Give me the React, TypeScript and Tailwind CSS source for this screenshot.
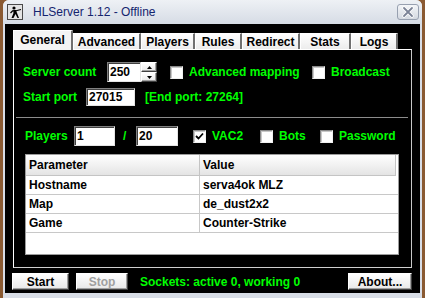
import React from "react";

const green = "text-[#00ff00]";

const sunken =
  "bg-white border border-t-[#808080] border-l-[#808080] border-r-[#e4e4e4] border-b-[#e4e4e4] shadow-[inset_1px_1px_0_#404040]";

const raised =
  "bg-linear-to-b from-[#ffffff] to-[#e8e8e8] border border-t-white border-l-white border-r-[#404040] border-b-[#404040] shadow-[inset_-1px_-1px_0_#a0a0a0]";

const tabs = [
  { name: "General", w: "w-[60px]" },
  { name: "Advanced", w: "w-[68px]" },
  { name: "Players", w: "w-[54px]" },
  { name: "Rules", w: "w-[47px]" },
  { name: "Redirect", w: "w-[58px]" },
  { name: "Stats", w: "w-[51px]" },
  { name: "Logs", w: "w-[47px]" },
];

const rows = [
  ["Hostname", "serva4ok MLZ"],
  ["Map", "de_dust2x2"],
  ["Game", "Counter-Strike"],
];

const Checkbox = ({ checked = false }: { checked?: boolean }) => (
  <div
    className={`w-[13px] h-[13px] shrink-0 flex items-center justify-center bg-white border border-t-[#8a8a8a] border-l-[#8a8a8a] border-r-[#f0f0f0] border-b-[#f0f0f0] shadow-[inset_1px_1px_0_#c8c8c8]`}
  >
    {checked && (
      <svg width="9" height="9" viewBox="0 0 9 9">
        <path d="M1 4 L3.5 6.5 L8 1.5" stroke="#000" strokeWidth="1.8" fill="none" />
      </svg>
    )}
  </div>
);

const CsIcon = () => (
  <svg width="16" height="16" viewBox="0 0 16 16">
    <rect x="0.5" y="0.5" width="15" height="15" fill="#e4e4e4" stroke="#4a4a4a" />
    <circle cx="7" cy="4" r="1.6" fill="#000" />
    <path d="M6 6 L9 6 L10 9 L12 14 L10.5 14 L8.5 10 L6.5 14 L4.5 14 L6.5 9 Z" fill="#000" />
    <path d="M8 7 L14 5.5" stroke="#000" strokeWidth="1.2" />
    <path d="M6 6.5 L3.5 9" stroke="#000" strokeWidth="1.2" />
  </svg>
);

const CloseButton = () => (
  <svg width="22" height="16" viewBox="0 0 22 16">
    <defs>
      <linearGradient id="cb" x1="0" y1="0" x2="0" y2="1">
        <stop offset="0" stopColor="#f4f6f9" />
        <stop offset="1" stopColor="#d3d8e0" />
      </linearGradient>
    </defs>
    <rect x="0.5" y="0.5" width="21" height="15" rx="2.5" fill="url(#cb)" stroke="#97a0b0" />
    <path d="M7 4 L15 12 M15 4 L7 12" stroke="#fff" strokeWidth="3.4" strokeLinecap="round" />
    <path d="M7 4 L15 12 M15 4 L7 12" stroke="#7a8296" strokeWidth="1.8" strokeLinecap="round" />
  </svg>
);

const App = () => {
  return (
    <div className="w-[425px] h-[298px] bg-[#8a5a32] px-[3px] overflow-hidden font-['Liberation_Sans',Arial,sans-serif] text-[12px] leading-none">
      <div className="h-full flex flex-col rounded-t-[6px] overflow-hidden bg-[#d8dde6]">
        {/* title bar */}
        <div className="h-[24px] shrink-0 flex items-center pl-[4px] pr-[3px] bg-linear-to-b from-[#eef1f5] to-[#d6dce5]">
          <CsIcon />
          <span className="ml-[10px] text-[12px] text-[#14246e]">HLServer 1.12 - Offline</span>
          <div className="ml-auto">
            <CloseButton />
          </div>
        </div>

        {/* body */}
        <div className="flex-1 mx-[2px] bg-black px-[8px] pt-[6px] flex flex-col font-bold">
          <div className="h-[19px] flex items-end">
            {tabs.map((t, i) =>
              i === 0 ? (
                <div
                  key={t.name}
                  className={`${t.w} h-[20px] -mb-px relative z-10 flex items-center justify-center pb-[2px] bg-[#f4f4f4] border-l border-t border-white border-r-2 border-r-[#707070] text-black`}
                >
                  {t.name}
                </div>
              ) : (
                <div
                  key={t.name}
                  className={`${t.w} h-[16px] flex items-center justify-center pt-[1px] bg-linear-to-b from-[#ffffff] to-[#ececec] border-l border-t border-white border-r-2 border-r-[#707070] text-black`}
                >
                  {t.name}
                </div>
              )
            )}
          </div>

          {/* panel */}
          <div className="h-[219px] shrink-0 flex flex-col border border-t-white border-l-white border-r-[#c8c8c8] border-b-[#d0d0d0]">
            <div className="mt-[12px] h-[20px] pl-[9px] flex items-center">
              <span className={`w-[84px] ${green}`}>Server count</span>
              <div className={`${sunken} w-[34px] h-[20px] flex items-center pl-[2px] text-black`}>250</div>
              <div className="w-[16px] h-[20px] flex flex-col">
                <div className={`${raised} flex-1 flex items-center justify-center`}>
                  <svg width="5" height="3" viewBox="0 0 5 3"><path d="M2.5 0 L5 3 L0 3 Z" fill="#000" /></svg>
                </div>
                <div className={`${raised} flex-1 flex items-center justify-center`}>
                  <svg width="5" height="3" viewBox="0 0 5 3"><path d="M0 0 L5 0 L2.5 3 Z" fill="#000" /></svg>
                </div>
              </div>
              <div className="ml-[13px]"><Checkbox /></div>
              <span className={`ml-[6px] w-[123px] ${green}`}>Advanced mapping</span>
              <Checkbox />
              <span className={`ml-[6px] ${green}`}>Broadcast</span>
            </div>

            <div className="mt-[6px] h-[18px] pl-[9px] flex items-center">
              <span className={`w-[63px] ${green}`}>Start port</span>
              <div className={`${sunken} w-[49px] h-[18px] flex items-center pl-[2px] text-black`}>27015</div>
              <span className={`ml-[10px] ${green}`}>[End port: 27264]</span>
            </div>

            <div className="mt-[11px] ml-[2px] mr-[3px] h-px bg-[#8c8c8c]" />

            <div className="mt-[8px] h-[20px] pl-[11px] flex items-center">
              <span className={`w-[49px] ${green}`}>Players</span>
              <div className={`${sunken} w-[41px] h-[20px] flex items-center pl-[2px] text-black`}>1</div>
              <span className={`w-[21px] pl-[8px] ${green}`}>/</span>
              <div className={`${sunken} w-[42px] h-[20px] flex items-center pl-[2px] text-black`}>20</div>
              <div className="ml-[15px]"><Checkbox checked /></div>
              <span className={`ml-[6px] w-[48px] ${green}`}>VAC2</span>
              <Checkbox />
              <span className={`ml-[6px] w-[41px] ${green}`}>Bots</span>
              <Checkbox />
              <span className={`ml-[6px] ${green}`}>Password</span>
            </div>

            <div className="mt-[8px] ml-[11px] w-[374px] h-[101px] bg-white border border-[#9c9c9c] flex flex-col text-black">
              <div className="h-[21px] shrink-0 flex bg-linear-to-b from-[#ffffff] to-[#e4e4e4] border-b border-[#c4c4c4] mr-[2px] border-r">
                <div className="w-[174px] flex items-center pl-[3px] border-r border-[#c4c4c4]">Parameter</div>
                <div className="flex-1 flex items-center pl-[3px]">Value</div>
              </div>
              {rows.map(([k, v]) => (
                <div key={k} className="h-[19px] shrink-0 flex border-b border-[#c8c8c8]">
                  <div className="w-[174px] flex items-center pl-[3px] border-r border-[#c8c8c8]">{k}</div>
                  <div className="flex-1 flex items-center pl-[3px]">{v}</div>
                </div>
              ))}
            </div>
          </div>

          {/* bottom bar */}
          <div className="mt-[5px] h-[17px] -ml-px flex items-center">
            <div className={`${raised} w-[57px] h-[17px] flex items-center justify-center text-black`}>Start</div>
            <div className={`${raised} ml-[7px] w-[52px] h-[17px] flex items-center justify-center text-[#a0a0a0]`}>Stop</div>
            <span className={`ml-[12px] ${green}`}>Sockets: active 0, working 0</span>
            <div className={`${raised} ml-auto w-[64px] h-[17px] flex items-center justify-center text-black`}>About...</div>
          </div>
        </div>

        <div className="h-[5px] shrink-0" />
      </div>
    </div>
  );
};

export default App;
